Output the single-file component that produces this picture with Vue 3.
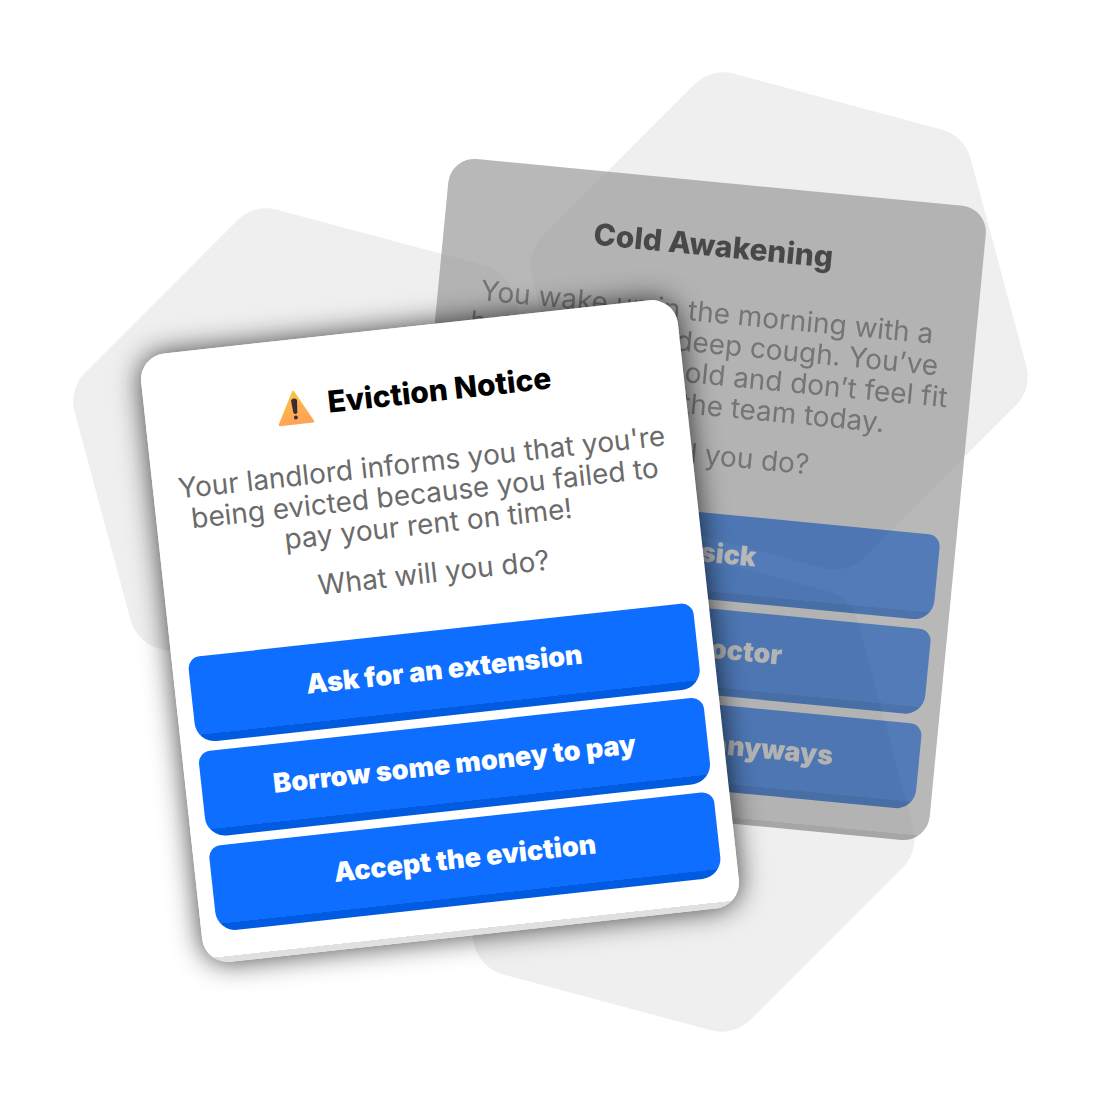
<script setup>
const hexagons = [
  { x: 779, y: 321 },
  { x: 322, y: 457 },
  { x: 666, y: 783 },
]

const hexPoints = [-105, -45, 15, 75, 135, 195]
  .map((deg) => {
    const rad = (deg * Math.PI) / 180
    return `${(215 * Math.cos(rad)).toFixed(1)},${(215 * Math.sin(rad)).toFixed(1)}`
  })
  .join(' ')

const cards = [
  {
    id: 'cold',
    kind: 'back',
    title: 'Cold Awakening',
    lines: [
      'You wake up in the morning with a',
      'hot fever and a deep cough. You’ve',
      'caught a strong cold and don’t feel fit',
      'to work with the team today.',
    ],
    choices: ['Call in sick', 'Go to the doctor', 'Head in to work anyways'],
  },
  {
    id: 'eviction',
    kind: 'front',
    title: 'Eviction Notice',
    warning: true,
    lines: [
      "Your landlord informs you that you're",
      'being evicted because you failed to',
      'pay your rent on time!',
    ],
    choices: ['Ask for an extension', 'Borrow some money to pay', 'Accept the eviction'],
  },
]
</script>

<template>
  <main class="stage">
    <svg class="hexes" viewBox="0 0 1100 1104" aria-hidden="true">
      <polygon
        v-for="(hex, i) in hexagons"
        :key="i"
        :points="hexPoints"
        :transform="`translate(${hex.x} ${hex.y})`"
      />
    </svg>

    <article v-for="card in cards" :key="card.id" class="card" :class="card.kind">
      <h2 class="title">
        <svg v-if="card.warning" class="warning" viewBox="0 0 36 40" aria-hidden="true">
          <defs>
            <linearGradient id="amber" x1="0" y1="0" x2="0.3" y2="1">
              <stop offset="0" stop-color="#f9c93e" />
              <stop offset="1" stop-color="#ffa456" />
            </linearGradient>
          </defs>
          <path d="M18 6 L35 38 H1 Z" fill="url(#amber)" stroke="url(#amber)" stroke-width="2" stroke-linejoin="round" />
          <path d="M16 15 Q18 13 20 15 L19 27 Q18 28 17 27 Z" fill="#3d2b3c" stroke="#3d2b3c" stroke-width="2" stroke-linejoin="round" />
          <circle cx="18" cy="32" r="2" fill="#3d2b3c" />
        </svg>
        <span>{{ card.title }}</span>
      </h2>
      <p class="story">
        <template v-for="(line, i) in card.lines" :key="i"><br v-if="i" />{{ line }}</template>
      </p>
      <p class="story">What will you do?</p>
      <div class="choices">
        <button v-for="choice in card.choices" :key="choice" type="button">{{ choice }}</button>
      </div>
    </article>
  </main>
</template>

<style>
body {
  margin: 0;
  background: #fff;
}
</style>

<style scoped>
.stage {
  position: relative;
  max-width: 1100px;
  margin: 0 auto;
  overflow: hidden;
  font-family: Inter, "Liberation Sans", sans-serif;
}

.hexes {
  display: block;
  width: 100%;
}

.hexes polygon {
  fill: #efefef;
  stroke: #efefef;
  stroke-width: 82;
  stroke-linejoin: round;
}

.card {
  position: absolute;
  box-sizing: border-box;
  width: 540px;
  padding: 46px 16px 31px;
  border-radius: 26px;
  background: linear-gradient(#fff calc(100% - 6px), #e0e0e0 calc(100% - 6px));
  text-align: center;
}

.back {
  top: 181px;
  left: calc(50% - 131px);
  transform: rotate(5.5deg);
  filter: brightness(0.6) opacity(0.7);
}

.front {
  top: 325px;
  left: calc(50% - 380px);
  transform: rotate(-6.25deg);
  box-shadow: 0 0 28px rgba(0, 0, 0, 0.75);
}

.title {
  display: flex;
  align-items: center;
  justify-content: center;
  gap: 15px;
  margin: 0 0 35px;
  font-size: 30px;
  font-weight: 800;
  line-height: 34px;
  color: #000;
}

.warning {
  width: 36px;
  height: 40px;
}

.story {
  margin: 0 0 18px;
  font-size: 28px;
  line-height: 31px;
  white-space: nowrap;
  color: #6b6b6b;
}

.choices {
  display: flex;
  flex-direction: column;
  gap: 9px;
  margin-top: 42px;
}

button {
  height: 86px;
  padding: 0 16px 8px;
  border: 0;
  border-radius: 12px 12px 20px 20px;
  background: linear-gradient(#0d6eff calc(100% - 8px), #005be0 calc(100% - 8px));
  font-family: inherit;
  font-size: 27px;
  font-weight: 900;
  color: #fff;
  cursor: pointer;
}
</style>
